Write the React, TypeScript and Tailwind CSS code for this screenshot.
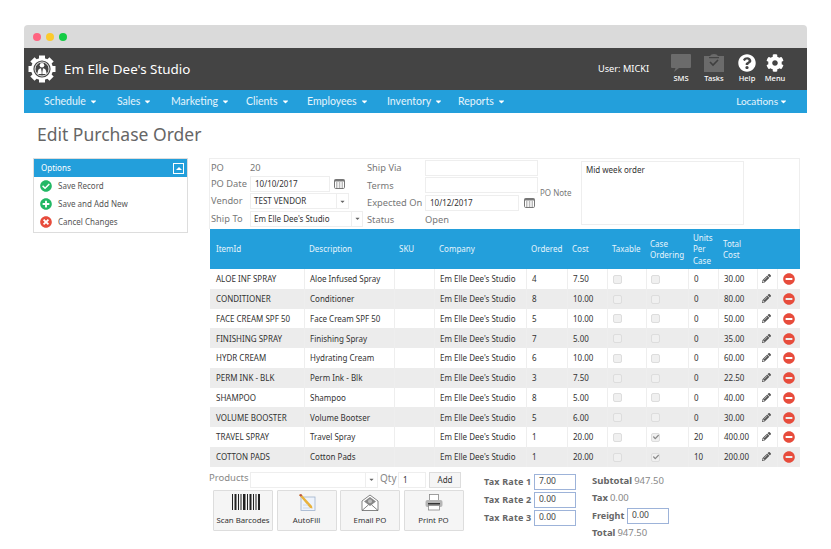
import { FaCaretDown, FaCheck, FaCheckCircle, FaCog, FaMinusCircle, FaPencilAlt, FaPlusCircle, FaQuestionCircle, FaTimesCircle } from 'react-icons/fa';

const NAV = ['Schedule', 'Sales', 'Marketing', 'Clients', 'Employees', 'Inventory', 'Reports'];
const NAV_W = ['w-[73px]', 'w-[54px]', 'w-[75px]', 'w-[61px]', 'w-[80px]', 'w-[71px]', 'w-[60px]'];

const ROWS = [
  ['ALOE INF SPRAY', 'Aloe Infused Spray', '4', '7.50', false, '0', '30.00'],
  ['CONDITIONER', 'Conditioner', '8', '10.00', false, '0', '80.00'],
  ['FACE CREAM SPF 50', 'Face Cream SPF 50', '5', '10.00', false, '0', '50.00'],
  ['FINISHING SPRAY', 'Finishing Spray', '7', '5.00', false, '0', '35.00'],
  ['HYDR CREAM', 'Hydrating Cream', '6', '10.00', false, '0', '60.00'],
  ['PERM INK - BLK', 'Perm Ink - Blk', '3', '7.50', false, '0', '22.50'],
  ['SHAMPOO', 'Shampoo', '8', '5.00', false, '0', '40.00'],
  ['VOLUME BOOSTER', 'Volume Bootser', '5', '6.00', false, '0', '30.00'],
  ['TRAVEL SPRAY', 'Travel Spray', '1', '20.00', true, '20', '400.00'],
  ['COTTON PADS', 'Cotton Pads', '1', '20.00', true, '10', '200.00'],
] as const;

const COLS = 'grid grid-cols-[94px_90px_40px_92px_41px_40px_39px_42px_30px_39px_20px_23px]';

function Logo() {
  return (
    <svg viewBox="0 0 28 28" className="h-[28px] w-[28px]">
      <g fill="#fff">
        {[0, 45, 90, 135, 180, 225, 270, 315].map((a) => (
          <rect key={a} x="11" y="0.5" width="6" height="5" transform={`rotate(${a} 14 14)`} />
        ))}
      </g>
      <circle cx="14" cy="14" r="11" fill="#fff" />
      <circle cx="14" cy="14" r="8.6" fill="#444" />
      <circle cx="14" cy="14" r="7" fill="none" stroke="#fff" strokeWidth="0.9" />
      <circle cx="14" cy="10.3" r="2.3" fill="#fff" />
      <path d="M9.5 19 Q9.5 13.5 13 13.2 L14 17 L15 13.2 Q18.5 13.5 18.5 19 Z" fill="#fff" />
      <path d="M14 14 V20" stroke="#444" strokeWidth="0.7" />
    </svg>
  );
}

function SmsIcon() {
  return (
    <svg viewBox="0 0 20 18" className="h-[18px] w-[20px]">
      <path d="M1 0 H19 Q20 0 20 1 V13 Q20 14 19 14 H8 L3 18 L4.5 14 H1 Q0 14 0 13 V1 Q0 0 1 0 Z" fill="#6b6b6b" />
    </svg>
  );
}

function TasksIcon() {
  return (
    <svg viewBox="0 0 20 18" className="h-[18px] w-[20px]">
      <path d="M0 2 H6 Q7 0 10 0 Q13 0 14 2 H20 V18 H0 Z" fill="#6b6b6b" />
      <path d="M6 8 L9 11 L14 6" fill="none" stroke="#3f3f3f" strokeWidth="1.6" />
      <rect x="5" y="3" width="10" height="1.2" fill="#444" />
    </svg>
  );
}

function CalendarIcon() {
  return (
    <svg viewBox="0 0 11 11" className="h-[11px] w-[11px]">
      <rect x="0.5" y="1.5" width="10" height="9" rx="1.2" fill="#fff" stroke="#777" />
      <rect x="0.5" y="1.5" width="10" height="2" fill="#777" />
      <path d="M2 5 H3.5 M4.8 5 H6.3 M7.6 5 H9 M2 7 H3.5 M4.8 7 H6.3 M7.6 7 H9 M2 9 H3.5 M4.8 9 H6.3 M7.6 9 H9" stroke="#777" strokeWidth="1" />
    </svg>
  );
}

function BarcodeIcon() {
  return (
    <svg viewBox="0 0 28 16" className="ml-[6px] h-[16px] w-[28px]">
      {[[0, 1], [2.5, 2], [6, 1], [8.5, 1], [11, 2.5], [15, 1], [17.5, 2], [21, 1], [23.5, 1], [26, 2]].map(([x, w]) => (
        <rect key={x} x={x} y="0" width={w} height="16" fill="#222" />
      ))}
    </svg>
  );
}

function AutoFillIcon() {
  return (
    <svg viewBox="0 0 18 17" className="h-[17px] w-[18px]">
      <rect x="3" y="3" width="14" height="13.5" fill="#eef3fb" stroke="#9fb2cc" strokeWidth="0.8" />
      <path d="M1 1 L3 0 L14 12 L14.5 14.5 L12 14 Z" fill="#e8b23c" />
      <path d="M1 1 L3 0 L4.5 1.6 L2.4 2.6 Z" fill="#b9564a" />
      <path d="M5 11 H10 M5 14 H12" stroke="#c7d2e2" strokeWidth="0.8" />
    </svg>
  );
}

function EmailIcon() {
  return (
    <svg viewBox="0 0 18 17" className="h-[17px] w-[18px]">
      <path d="M1 7 L9 1 L17 7 V16.5 H1 Z" fill="#fff" stroke="#666" strokeWidth="0.8" />
      <path d="M3 7.5 L9 3 L15 7.5 L9 12 Z" fill="#888" />
      <circle cx="9" cy="7.2" r="2" fill="#bbb" />
      <path d="M1 16.5 L7.5 10.8 M17 16.5 L10.5 10.8" stroke="#666" strokeWidth="0.8" />
    </svg>
  );
}

function PrintIcon() {
  return (
    <svg viewBox="0 0 18 17" className="h-[17px] w-[18px]">
      <rect x="4.5" y="0.5" width="9" height="6" fill="#fff" stroke="#888" strokeWidth="0.8" />
      <rect x="0.5" y="6" width="17" height="7" rx="2" fill="#b5b5b5" />
      <rect x="3" y="9" width="12" height="1.5" fill="#333" />
      <rect x="3.5" y="11.5" width="11" height="4.5" fill="#fff" stroke="#888" strokeWidth="0.8" />
    </svg>
  );
}

function Select({ value, w, inputW }: { value: string; w: string; inputW: string }) {
  return (
    <div className={`flex h-[16px] items-center border border-[#eee] bg-white ${w}`}>
      <span className={`truncate pl-[3px] text-[8px] text-[#333] ${inputW}`}>{value}</span>
      <span className="flex h-full flex-1 items-center justify-center border-l border-[#eee]">
        <FaCaretDown className="text-[7px] text-[#666]" />
      </span>
    </div>
  );
}

function TextBox({ value, w }: { value?: string; w: string }) {
  return (
    <div className={`flex h-[16px] items-center border border-[#eee] bg-white pl-[4px] text-[8px] text-[#333] ${w}`}>{value}</div>
  );
}

function Check({ on }: { on: boolean }) {
  return (
    <div className="flex h-[9px] w-[9px] items-center justify-center rounded-[2px] border border-[#ddd] bg-[#f0f0f0]">
      {on && <FaCheck className="text-[6px] text-[#888]" />}
    </div>
  );
}

function ToolButton({ label, icon }: { label: string; icon: React.ReactNode }) {
  return (
    <div className="flex h-[41px] w-[60px] flex-col items-center rounded-[1px] border border-[#ddd] bg-[#f5f5f5] pt-[1px]">
      <div className="flex h-[20px] items-center">{icon}</div>
      <span className="mt-[3px] text-[7.8px] text-[#333]">{label}</span>
    </div>
  );
}

function TaxRate({ label, value }: { label: string; value: string }) {
  return (
    <div className="flex h-[18px] items-center">
      <span className="w-[50px] text-[9px] font-bold tracking-[0.2px] text-[#666]">{label}</span>
      <div className="flex h-[16px] w-[42px] items-end border border-[#9db3d9] bg-white pb-[1px] pl-[4px] text-[8.5px] text-[#444]">{value}</div>
    </div>
  );
}

export default function App() {
  return (
    <div className="h-[549px] w-[831px] overflow-hidden bg-white pl-[24px] pt-[25px] font-['Noto_Sans',sans-serif]">
      <div className="w-[783px]">
        <div className="flex h-[23px] items-center gap-[5px] rounded-t-[4px] bg-[#dadada] pl-[9px]">
          <span className="h-[8px] w-[8px] rounded-full bg-[#ff6480]" />
          <span className="h-[8px] w-[8px] rounded-full bg-[#fcca2c]" />
          <span className="h-[8px] w-[8px] rounded-full bg-[#14cc45]" />
        </div>

        <div className="flex h-[42px] items-center bg-[#444] pl-[4px] pr-[23px]">
          <Logo />
          <span className="ml-[8px] text-[13.4px] text-white">Em Elle Dee's Studio</span>
          <span className="ml-auto text-[9.2px] text-white">User: MICKI</span>
          <div className="ml-[22px] flex w-[20px] flex-col items-center">
            <SmsIcon />
            <span className="text-[7.5px] font-medium leading-[12px] text-white">SMS</span>
          </div>
          <div className="ml-[13px] flex w-[20px] flex-col items-center">
            <TasksIcon />
            <span className="text-[7.5px] font-medium leading-[12px] text-white">Tasks</span>
          </div>
          <div className="ml-[14px] flex w-[18px] flex-col items-center">
            <FaQuestionCircle className="h-[18px] w-[18px] text-white" />
            <span className="text-[7.5px] font-medium leading-[12px] text-white">Help</span>
          </div>
          <div className="ml-[10px] flex w-[18px] flex-col items-center">
            <FaCog className="h-[18px] w-[18px] text-white" />
            <span className="text-[7.5px] font-medium leading-[12px] text-white">Menu</span>
          </div>
        </div>

        <div className="flex h-[23px] items-center bg-[#239fdb] pl-[20px] pr-[19px] font-['Lato',sans-serif] text-[10.5px] text-[#e6f4fb]">
          {NAV.map((n, i) => (
            <div key={n} className={`flex items-center gap-[3px] ${NAV_W[i]}`}>
              {n}
              <FaCaretDown className="text-[9px] text-white" />
            </div>
          ))}
          <div className="ml-auto flex items-center gap-[1px] text-[10px]">
            Locations
            <FaCaretDown className="text-[9px] text-white" />
          </div>
        </div>

        <h1 className="ml-[13px] mt-[9px] h-[36px] text-[17.5px] leading-[25px] text-[#666]">Edit Purchase Order</h1>

        <div className="flex items-start">
          <div className="ml-[9px] w-[155px] border border-[#ddd]">
            <div className="flex h-[18px] items-center justify-between bg-[#239fdb] pl-[7px] pr-[3px] text-[8px] text-white">
              Options
              <span className="flex h-[11px] w-[11px] items-center justify-center border border-white">
                <span className="h-0 w-0 border-x-[3px] border-b-[3px] border-x-transparent border-b-white" />
              </span>
            </div>
            <div className="flex flex-col pb-[2px] pl-[6px] text-[8px] text-[#555]">
              <div className="flex h-[18px] items-center gap-[6px]"><FaCheckCircle className="h-[12px] w-[12px] text-[#22b865]" />Save Record</div>
              <div className="flex h-[18px] items-center gap-[6px]"><FaPlusCircle className="h-[12px] w-[12px] text-[#22b865]" />Save and Add New</div>
              <div className="flex h-[17px] items-center gap-[6px]"><FaTimesCircle className="h-[12px] w-[12px] text-[#e74c3c]" />Cancel Changes</div>
            </div>
          </div>

          <div className="ml-[21px] w-[592px]">
            <div className="w-[591px] border border-b-0 border-[#eee] pl-[1px]">
              <div className="flex h-[70px] whitespace-nowrap text-[9.3px] text-[#777]">
                <div className="w-[156px]">
                  <div className="flex h-[16px] items-center pt-[1px]"><span className="w-[39px]">PO</span><span>20</span></div>
                  <div className="flex h-[17.5px] items-center">
                    <span className="w-[39px]">PO Date</span>
                    <TextBox value="10/10/2017" w="w-[80px]" />
                    <span className="ml-[4px]"><CalendarIcon /></span>
                  </div>
                  <div className="flex h-[17.5px] items-center">
                    <span className="w-[39px]">Vendor</span>
                    <Select value="TEST VENDOR" w="w-[99px]" inputW="w-[85px]" />
                  </div>
                  <div className="flex h-[17.5px] items-center">
                    <span className="w-[39px]">Ship To</span>
                    <Select value="Em Elle Dee's Studio" w="w-[113px]" inputW="w-[100px]" />
                  </div>
                </div>
                <div className="w-[173px]">
                  <div className="flex h-[17.5px] items-center"><span className="w-[58px] pt-[1px]">Ship Via</span><TextBox w="w-[113px]" /></div>
                  <div className="flex h-[17.5px] items-center"><span className="w-[58px] pt-[1px]">Terms</span><TextBox w="w-[113px]" /></div>
                  <div className="flex h-[17.5px] items-center">
                    <span className="w-[58px] pt-[1px]">Expected On</span>
                    <TextBox value="10/12/2017" w="w-[94px]" />
                    <span className="ml-[5px]"><CalendarIcon /></span>
                  </div>
                  <div className="flex h-[16px] items-center"><span className="w-[58px]">Status</span><span>Open</span></div>
                </div>
                <span className="mt-[28px] w-[41px] text-[8px]">PO Note</span>
                <div className="mt-[2px] h-[64px] w-[163px] border border-[#eee] pl-[4px] pt-[2px] text-[8px] text-[#333]">Mid week order</div>
              </div>
            </div>

            <div className="ml-[1px] w-[590px] bg-[#eee]">
              <div className={`${COLS} h-[40px] items-center bg-[#239fdb] text-[8px] leading-[11.5px] text-[#e6f4fb]`}>
                <span className="pl-[6px]">ItemId</span>
                <span className="pl-[5px]">Description</span>
                <span className="pl-[5px]">SKU</span>
                <span className="pl-[5px]">Company</span>
                <span className="pl-[5px]">Ordered</span>
                <span className="pl-[5px]">Cost</span>
                <span className="pl-[5px]">Taxable</span>
                <span className="pl-[4px]">Case<br />Ordering</span>
                <span className="pl-[5px]">Units<br />Per<br />Case</span>
                <span className="pl-[5px]">Total<br />Cost</span>
                <span />
                <span />
              </div>
              {ROWS.map((r, i) => (
                <div key={r[0]} className={`${COLS} h-[19.75px] text-[8px] text-[#333] ${i % 2 ? 'bg-[#ececec]' : 'bg-white'}`}>
                  <div className="flex items-center pl-[6px] pt-[1px]">{r[0]}</div>
                  <div className="flex items-center border-l border-[#eee] pl-[5px] pt-[1px]">{r[1]}</div>
                  <div className="border-l border-[#eee]" />
                  <div className="flex items-center border-l border-[#eee] pl-[5px] pt-[1px]">Em Elle Dee's Studio</div>
                  <div className="flex items-center border-l border-[#eee] pl-[5px] pt-[1px]">{r[2]}</div>
                  <div className="flex items-center border-l border-[#eee] pl-[5px] pt-[1px]">{r[3]}</div>
                  <div className="flex items-center border-l border-[#eee] pl-[5px] pt-[1px]"><Check on={false} /></div>
                  <div className="flex items-center border-l border-[#eee] pl-[4px] pt-[1px]"><Check on={r[4]} /></div>
                  <div className="flex items-center border-l border-[#eee] pl-[5px] pt-[1px]">{r[5]}</div>
                  <div className="flex items-center border-l border-[#eee] pl-[5px] pt-[1px]">{r[6]}</div>
                  <div className="flex items-center border-l border-[#eee] pl-[4px]"><FaPencilAlt className="h-[9px] w-[9px] text-[#555]" /></div>
                  <div className="flex items-center border-l border-[#eee] pl-[5px] pt-[1px]"><FaMinusCircle className="h-[12px] w-[12px] text-[#e74c3c]" /></div>
                </div>
              ))}
            </div>

            <div className="mt-[5px] flex text-[9.5px] text-[#888]">
              <div className="w-[275px]">
                <div className="flex h-[16px] items-center">
                  <span className="mb-[2px] w-[41px]">Products</span>
                  <Select value="" w="w-[128px]" inputW="w-[114px]" />
                  <span className="mb-[2px] ml-[2px] w-[18px] text-[10px]">Qty</span>
                  <TextBox value="1" w="w-[28px]" />
                  <span className="ml-[3px] flex h-[16px] w-[32px] items-center justify-center border border-[#ddd] bg-[#f5f5f5] text-[8px] text-[#333]">Add</span>
                </div>
                <div className="ml-[4px] mt-[2.5px] flex gap-[3.5px]">
                  <ToolButton label="Scan Barcodes" icon={<BarcodeIcon />} />
                  <ToolButton label="AutoFill" icon={<AutoFillIcon />} />
                  <ToolButton label="Email PO" icon={<EmailIcon />} />
                  <ToolButton label="Print PO" icon={<PrintIcon />} />
                </div>
              </div>
              <div className="w-[108px] pt-[1.5px]">
                <TaxRate label="Tax Rate 1" value="7.00" />
                <TaxRate label="Tax Rate 2" value="0.00" />
                <TaxRate label="Tax Rate 3" value="0.00" />
              </div>
              <div>
                <div className="mt-[1px] flex h-[17px] items-center gap-[2px]"><b className="text-[#666]">Subtotal</b> 947.50</div>
                <div className="flex h-[18px] items-center gap-[2px]"><b className="text-[#666]">Tax</b> 0.00</div>
                <div className="flex h-[17px] items-center">
                  <b className="w-[35px] text-[9px] text-[#666]">Freight</b>
                  <div className="flex h-[16px] w-[42px] items-end border border-[#9db3d9] bg-white pb-[1px] pl-[4px] text-[8.5px] text-[#444]">0.00</div>
                </div>
                <div className="flex h-[17px] items-center gap-[2px]"><b className="text-[#666]">Total</b> 947.50</div>
              </div>
            </div>
          </div>
        </div>
      </div>
    </div>
  );
}
